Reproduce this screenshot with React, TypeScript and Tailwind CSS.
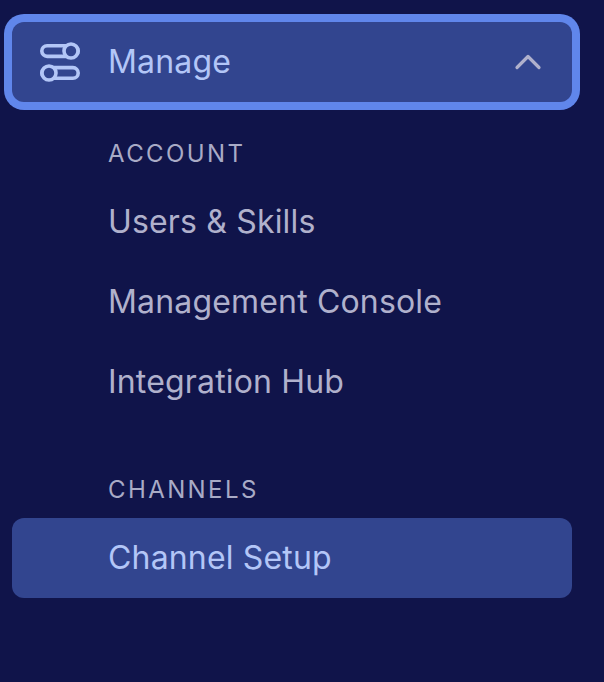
import { ChevronUp } from "lucide-react";

const accountLinks = ["Users & Skills", "Management Console", "Integration Hub"];

function ManageIcon() {
  return (
    <svg width="40" height="40" viewBox="0 0 40 40" fill="none" stroke="currentColor" strokeWidth="3.6" className="shrink-0">
      <rect x="1.8" y="3.8" width="36.4" height="10.6" rx="5.3" />
      <circle cx="31" cy="9" r="7" fill="#32458f" />
      <rect x="1.8" y="25.6" width="36.4" height="10.6" rx="5.3" />
      <circle cx="9" cy="31" r="7" fill="#32458f" />
    </svg>
  );
}

export default function App() {
  return (
    <div className="h-[682px] w-[604px] overflow-hidden bg-[#10144a] pl-3 pr-8 pt-[22px] font-['Inter',sans-serif]">
      <button className="flex h-20 w-full items-center rounded-xl bg-[#32458f] pl-7 pr-[22px] text-[#b3c6f7] shadow-[0_0_0_8px_#6086eb]">
        <ManageIcon />
        <span className="ml-7 text-[32px] leading-[48px] tracking-[0.17px]">Manage</span>
        <ChevronUp className="ml-auto text-[#b0b1cc]" size={44} strokeWidth={1.75} />
      </button>

      <p className="mt-[37px] pl-24 text-2xl leading-[30px] tracking-[0.1em] text-[#a9abc6]">ACCOUNT</p>
      <ul className="mt-[13px]">
        {accountLinks.map((link) => (
          <li key={link} className="flex h-20 items-center pl-24 text-[32px] tracking-[0.17px] text-[#b0b1cc]">
            {link}
          </li>
        ))}
      </ul>

      <p className="mt-[53px] pl-24 text-2xl leading-[30px] tracking-[0.1em] text-[#a9abc6]">CHANNELS</p>
      <div className="mt-[13px] flex h-20 items-center rounded-xl bg-[#32458f] pl-24 text-[32px] tracking-[0.17px] text-[#b3c6f7]">
        Channel Setup
      </div>
    </div>
  );
}
